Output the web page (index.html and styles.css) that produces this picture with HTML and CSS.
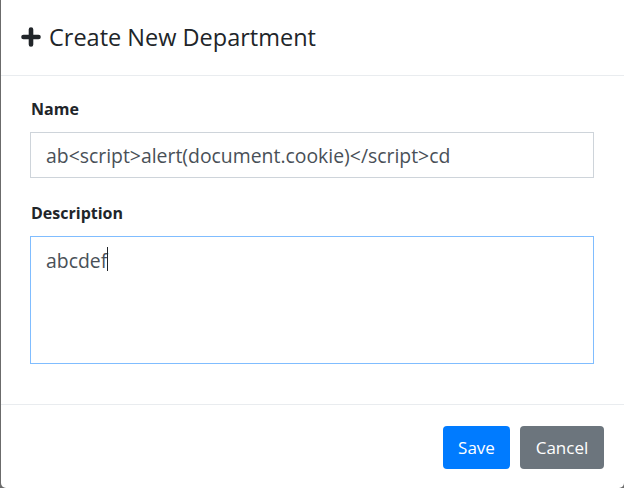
FILE: index.html
```html
<!DOCTYPE html>
<html>
<head>
<meta charset="utf-8">
<link rel="stylesheet" href="styles.css">
</head>
<body>
<div class="modal">
  <div class="modal-header">
    <svg class="plus" width="20" height="20" viewBox="0 0 20 20"><path d="M10 2.5V17.5M2.5 10H17.5" stroke="#212529" stroke-width="4.6" stroke-linecap="round" fill="none"/></svg>
    <h5 class="title">Create New Department</h5>
  </div>
  <div class="modal-body">
    <div class="group">
      <label class="label">Name</label>
      <div class="input">ab&lt;script&gt;alert(document.cookie)&lt;/script&gt;cd</div>
    </div>
    <div class="group">
      <label class="label">Description</label>
      <div class="input textarea">abcdef<span class="caret"></span></div>
    </div>
  </div>
  <div class="modal-footer">
    <span class="btn btn-primary">Save</span>
    <span class="btn btn-secondary">Cancel</span>
  </div>
</div>
</body>
</html>
```
FILE: styles.css
```css
html, body {
  margin: 0;
  padding: 0;
  background: #6b6b6b;
  overflow: hidden;
  font-family: "Open Sans", "Noto Sans", sans-serif;
  color: #212529;
}
.modal {
  margin-left: 1px;
  width: 623px;
  height: 488px;
  background: #fff;
  border-radius: 0 0 5px 5px;
  display: flex;
  flex-direction: column;
}
.modal-header {
  height: 76px;
  box-sizing: border-box;
  border-bottom: 1px solid #e9ecef;
  display: flex;
  align-items: center;
  padding: 0 20px 1px 20px;
  gap: 8px;
}
.plus { flex: none; }
.title {
  margin: 0;
  font-size: 23.5px;
  font-weight: 400;
  line-height: 30px;
}
.modal-body {
  padding: 21px 30px 40px 29px;
  display: flex;
  flex-direction: column;
  gap: 23px;
  border-bottom: 1px solid #e9ecef;
}
.group {
  display: flex;
  flex-direction: column;
}
.label {
  font-weight: 700;
  font-size: 16px;
  line-height: 24px;
  margin-bottom: 11px;
  padding-left: 1px;
}
.input {
  height: 46px;
  box-sizing: border-box;
  border: 1px solid #ced4da;
  padding: 0 15px;
  font-size: 19.4px;
  color: #495057;
  display: flex;
  align-items: center;
  white-space: nowrap;
}
.textarea {
  height: 128px;
  border-color: #80bdff;
  align-items: flex-start;
  padding-top: 10px;
  line-height: 28px;
}
.caret {
  display: inline-block;
  width: 1px;
  height: 24px;
  background: #212529;
  vertical-align: -6px;
}
.modal-footer {
  display: flex;
  justify-content: flex-end;
  gap: 10px;
  padding: 21px 20px 0 0;
}
.btn {
  height: 43px;
  box-sizing: border-box;
  display: flex;
  align-items: center;
  justify-content: center;
  color: #fff;
  font-size: 17px;
  border-radius: 4px;
  padding: 0 15px;
}
.btn-primary { background: #007bff; width: 67px; }
.btn-secondary { background: #6c757d; width: 84px; }
```
